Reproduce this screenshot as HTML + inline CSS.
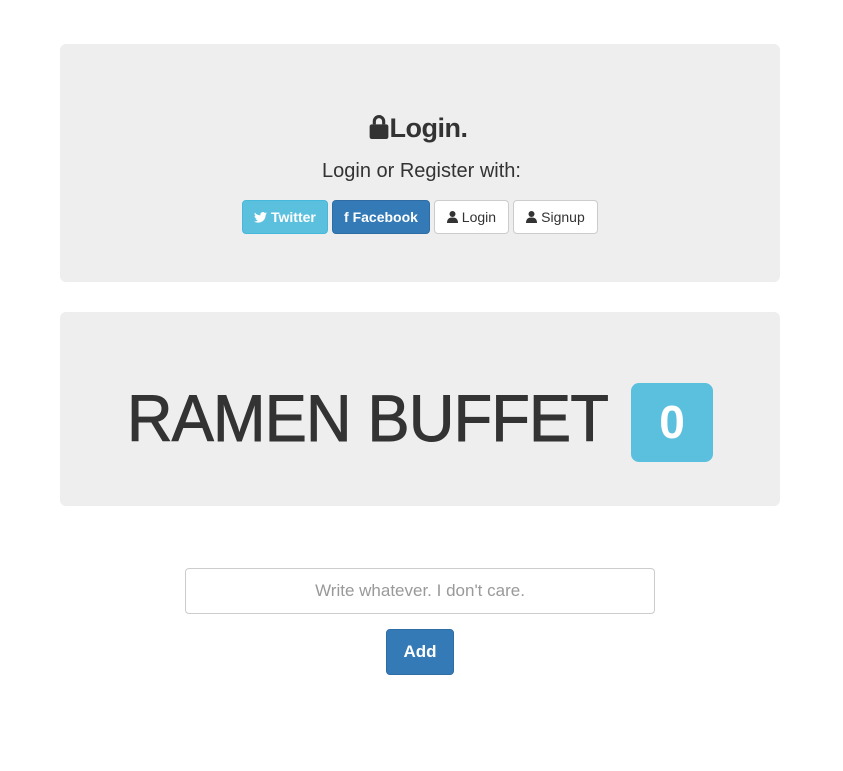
<!DOCTYPE html>
<html><head><style>
body{margin:0;background:#fff;font-family:"Liberation Sans",Helvetica,Arial,sans-serif;color:#333;}
.jb{position:absolute;left:60px;width:720px;background:#eee;border-radius:6px;}
.btn{position:absolute;top:200px;height:34px;box-sizing:border-box;border-radius:4px;font-size:14px;line-height:32px;text-align:center;border:1px solid}
svg{vertical-align:-1px}
</style></head><body>
<div class="jb" style="top:44px;height:238px"></div>
<div style="position:absolute;top:113px;left:-4px;width:843px;text-align:center;font-size:27px;font-weight:bold;letter-spacing:-0.5px">
<svg width="22" height="25" viewBox="0 0 20 24" style="vertical-align:-2px"><path d="M4 10V7a6 6 0 0 1 12 0v3h-3V7a3 3 0 0 0-6 0v3z" fill="#333"/><rect x="1" y="10" width="18" height="14" rx="2" fill="#333"/></svg>Login.</div>
<div style="position:absolute;top:160px;left:0;width:843px;text-align:center;font-size:20px;">Login or Register with:</div>
<div class="btn" style="left:242px;width:86px;background:#5bc0de;border-color:#46b8da;color:#fff;font-weight:bold">
<svg width="13" height="11" viewBox="0 0 24 20"><path d="M24 2.4a10 10 0 0 1-2.8.8A5 5 0 0 0 23.3.4a10 10 0 0 1-3.1 1.2A4.9 4.9 0 0 0 11.8 6 14 14 0 0 1 1.7.9a4.9 4.9 0 0 0 1.5 6.6 4.9 4.9 0 0 1-2.2-.6 4.9 4.9 0 0 0 4 4.9 5 5 0 0 1-2.2.1 4.9 4.9 0 0 0 4.6 3.4A9.9 9.9 0 0 1 0 17.3 14 14 0 0 0 7.5 19.5c9.1 0 14-7.5 14-14v-.6A10 10 0 0 0 24 2.4z" fill="#fff"/></svg> Twitter</div>
<div class="btn" style="left:332px;width:98px;background:#337ab7;border-color:#2e6da4;color:#fff;font-weight:bold">f Facebook</div>
<div class="btn" style="left:434px;width:75px;background:#fff;border-color:#ccc;color:#333">
<svg width="11" height="12" viewBox="0 0 11 12"><circle cx="5.5" cy="3" r="3" fill="#333"/><path d="M0 12c0-4 2-5.5 5.5-5.5S11 8 11 12z" fill="#333"/></svg> Login</div>
<div class="btn" style="left:513px;width:85px;background:#fff;border-color:#ccc;color:#333">
<svg width="11" height="12" viewBox="0 0 11 12"><circle cx="5.5" cy="3" r="3" fill="#333"/><path d="M0 12c0-4 2-5.5 5.5-5.5S11 8 11 12z" fill="#333"/></svg> Signup</div>

<div class="jb" style="top:312px;height:194px"></div>
<div style="position:absolute;top:380px;left:127px;font-size:66px;line-height:76px;letter-spacing:-0.8px;-webkit-text-stroke:1px #333;white-space:nowrap;transform:scaleX(0.955);transform-origin:0 0">RAMEN BUFFET</div>
<div style="position:absolute;left:631px;top:383px;width:82px;height:79px;background:#5bc0de;border-radius:8px;color:#fff;font-weight:bold;font-size:46px;line-height:79px;text-align:center">0</div>

<div style="position:absolute;left:185px;top:568px;width:470px;height:46px;box-sizing:border-box;border:1px solid #ccc;border-radius:4px;text-align:center;line-height:44px;font-size:17px;color:#999">Write whatever. I don't care.</div>
<div style="position:absolute;left:386px;top:629px;width:68px;height:46px;box-sizing:border-box;background:#337ab7;border:1px solid #2e6da4;border-radius:4px;color:#fff;font-size:17px;font-weight:bold;text-align:center;line-height:44px">Add</div>
</body></html>
